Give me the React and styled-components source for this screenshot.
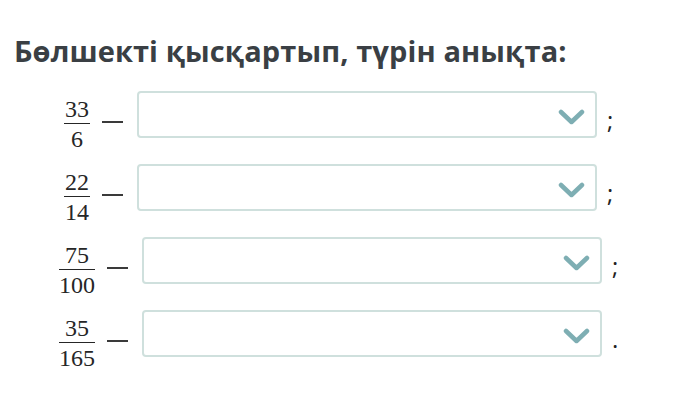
import React from 'react';
import styled, { createGlobalStyle } from 'styled-components';

const GlobalStyle = createGlobalStyle`
  body {
    margin: 0;
    background: #ffffff;
    font-family: "Open Sans", "Liberation Sans", sans-serif;
  }
`;

const Page = styled.div`
  width: 673px;
  height: 407px;
  padding: 32px 0 0 14px;
  box-sizing: border-box;
`;

const Title = styled.h1`
  margin: 0;
  font-size: 29px;
  line-height: 38px;
  font-weight: 700;
  color: #3a3f44;
  letter-spacing: 0.1px;
`;

const List = styled.div`
  display: flex;
  flex-direction: column;
  gap: 26px;
  margin-top: 21px;
  margin-left: -14px;
`;

const Row = styled.div`
  display: flex;
  align-items: center;
  justify-content: center;
  height: 47px;
  padding-left: 10px;
`;

const Fraction = styled.span`
  display: inline-flex;
  flex-direction: column;
  align-items: center;
  margin-top: 18px;
  padding: 0 2px;
  font-family: "Liberation Serif", "DejaVu Serif", serif;
  font-size: 24px;
  line-height: 22px;
  color: #262626;
`;

const Num = styled.span`
  padding: 0 1px 3px;
  border-bottom: 1.5px solid #262626;
  align-self: stretch;
  text-align: center;
`;

const Den = styled.span`
  padding-top: 4px;
`;

const Dash = styled.span`
  width: 21px;
  height: 1.5px;
  background: #3a3a3a;
  margin: 15px 14px 0 10px;
`;

const Select = styled.div`
  width: 460px;
  height: 47px;
  box-sizing: border-box;
  border: 2px solid #cfe0dd;
  border-radius: 4px;
  display: flex;
  align-items: center;
  justify-content: flex-end;
  padding: 5px 10px 0 0;
`;

const Punct = styled.span`
  align-self: flex-end;
  width: 14px;
  margin-left: 10px;
  padding-bottom: 2px;
  font-size: 24px;
  color: #222;
`;

const Chevron = () => (
  <svg width="27" height="17" viewBox="0 0 27 17">
    <polyline points="3,3 13.5,13 24,3" fill="none" stroke="#7eaeb3" strokeWidth="4.5" strokeLinecap="round" strokeLinejoin="round" />
  </svg>
);

const rows = [
  { n: '33', d: '6', p: ';' },
  { n: '22', d: '14', p: ';' },
  { n: '75', d: '100', p: ';' },
  { n: '35', d: '165', p: '.' },
];

const App = () => (
  <Page>
    <GlobalStyle />
    <Title>Бөлшекті қысқартып, түрін анықта:</Title>
    <List>
      {rows.map((r, i) => (
        <Row key={i}>
          <Fraction>
            <Num>{r.n}</Num>
            <Den>{r.d}</Den>
          </Fraction>
          <Dash />
          <Select>
            <Chevron />
          </Select>
          <Punct>{r.p}</Punct>
        </Row>
      ))}
    </List>
  </Page>
);

export default App;
